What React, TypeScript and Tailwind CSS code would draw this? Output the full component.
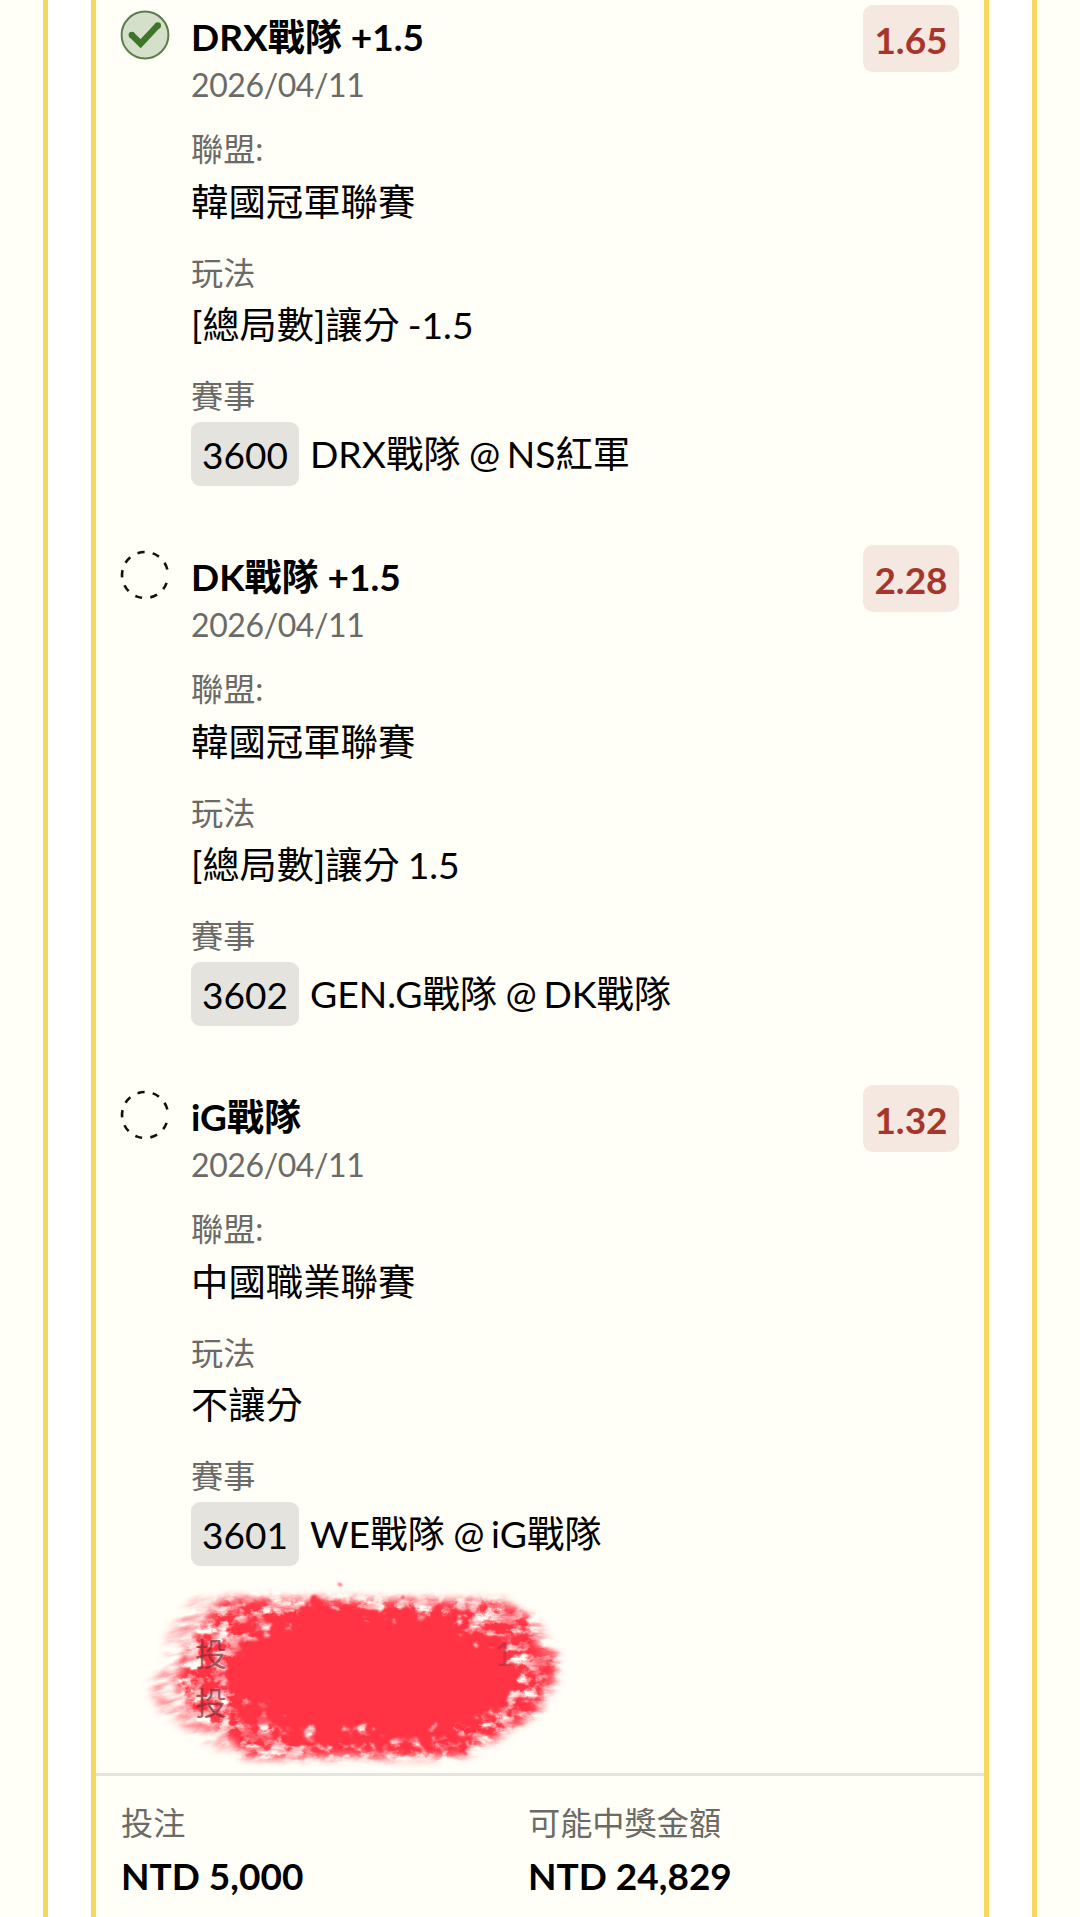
interface Leg {
    title: string
    odds: string
    date: string
    league: string
    market: string
    code: string
    home: string
    away: string
    won?: boolean
}

const legs: Leg[] = [
    {
        title: "DRX戰隊 +1.5",
        odds: "1.65",
        date: "2026/04/11",
        league: "韓國冠軍聯賽",
        market: "[總局數]讓分 -1.5",
        code: "3600",
        home: "DRX戰隊",
        away: "NS紅軍",
        won: true,
    },
    {
        title: "DK戰隊 +1.5",
        odds: "2.28",
        date: "2026/04/11",
        league: "韓國冠軍聯賽",
        market: "[總局數]讓分 1.5",
        code: "3602",
        home: "GEN.G戰隊",
        away: "DK戰隊",
    },
    {
        title: "iG戰隊",
        odds: "1.32",
        date: "2026/04/11",
        league: "中國職業聯賽",
        market: "不讓分",
        code: "3601",
        home: "WE戰隊",
        away: "iG戰隊",
    },
]

// nine dashes in degrees, the last gap (on the right side) is wider
const pendingDashes = "18 20.5 ".repeat(8) + "18 34"

function StatusIcon({ won }: { won?: boolean }) {
    return (
        <svg viewBox="0 0 50 50" className="mt-[5px] ml-[-1px] h-[50px] w-[50px] shrink-0" fill="none">
            {won ? (
                <>
                    <circle cx="25" cy="25" r="23.4" fill="#d5e0cb" stroke="#5c7e4b" strokeWidth="2" />
                    <path d="M12 25.2L20.6 33.6L37.8 15.4" stroke="#3f752b" strokeWidth="6.4" />
                    <circle cx="11.8" cy="25" r="3.2" fill="#3f752b" />
                    <circle cx="37.8" cy="15.4" r="3.2" fill="#3f752b" />
                </>
            ) : (
                <circle
                    cx="25"
                    cy="25"
                    r="23"
                    pathLength="360"
                    stroke="#111"
                    strokeWidth="2.6"
                    strokeDasharray={pendingDashes}
                    transform="rotate(20 25 25)"
                />
            )}
        </svg>
    )
}

function Label({ children }: { children: string }) {
    return <p className="h-[45px] text-[32.2px] leading-[45px] text-[#6b6a66]">{children}</p>
}

function LegItem({ leg }: { leg: Leg }) {
    return (
        <li className="flex h-[540px] items-start">
            <StatusIcon won={leg.won} />
            <div className="ml-[21px] flex-1 text-black">
                <h2 className="h-[55px] text-[37px] leading-[64px] font-bold">{leg.title}</h2>
                <p className="h-[38px] text-[32px] leading-[49px] tracking-[-0.4px] text-[#6b6a66]">{leg.date}</p>
                <div className="mt-[28px]">
                    <Label>聯盟:</Label>
                    <p className="h-[60px] text-[37.4px] leading-[61px]">{leg.league}</p>
                </div>
                <div className="mt-[19px]">
                    <Label>玩法</Label>
                    <p className="h-[60px] text-[37.2px] leading-[60px] [word-spacing:-1.5px]">{leg.market}</p>
                </div>
                <div className="mt-[18px]">
                    <Label>賽事</Label>
                    <div className="mt-[4px] flex h-[64px] items-center text-[37px] leading-[64px]">
                        <span className="h-[64px] w-[108px] rounded-[9px] bg-[#e5e3dd] pt-px text-center">{leg.code}</span>
                        <span className="ml-[11px] text-[37.3px]">
                            {leg.home} <span className="mr-[-3px] ml-[-1px]">@</span> {leg.away}
                        </span>
                    </div>
                </div>
            </div>
            <div className="h-[67px] w-[96px] rounded-[10px] bg-[#f5e8e0] text-center text-[37px] leading-[69px] font-bold text-[#a6352b]">
                {leg.odds}
            </div>
        </li>
    )
}

// Dry brush stroke: soft shapes broken up by thresholded noise, over a solid core
function BrushStroke() {
    return (
        <svg viewBox="0 0 450 200" className="absolute top-0 left-[33px] h-[200px] w-[450px]">
            <defs>
                <filter id="brush" filterUnits="userSpaceOnUse" x="0" y="0" width="450" height="200" colorInterpolationFilters="sRGB">
                    <feGaussianBlur in="SourceAlpha" stdDeviation="5" result="soft" />
                    <feTurbulence type="fractalNoise" baseFrequency="0.07 0.09" numOctaves="5" seed="8" />
                    <feColorMatrix values="0 0 0 0 0  0 0 0 0 0  0 0 0 0 0  4.6 0 0 0 -1.75" result="grain" />
                    <feFlood floodColor="#ff3344" />
                    <feComposite in2="grain" operator="in" />
                    <feComposite in2="soft" operator="in" />
                    <feGaussianBlur stdDeviation="0.6" />
                </filter>
                <filter id="bristles" filterUnits="userSpaceOnUse" x="-60" y="-60" width="600" height="360" colorInterpolationFilters="sRGB">
                    <feTurbulence type="fractalNoise" baseFrequency="0.03 0.11" numOctaves="5" seed="5" />
                    <feColorMatrix values="0 0 0 0 1  0 0 0 0 0.2  0 0 0 0 0.27  2.6 0 0 0 -0.9" result="streaks" />
                    <feGaussianBlur in="SourceGraphic" stdDeviation="4" result="shape" />
                    <feComposite in="streaks" in2="shape" operator="in" />
                    <feGaussianBlur stdDeviation="0.7" />
                </filter>
                <filter id="core" filterUnits="userSpaceOnUse" x="0" y="0" width="450" height="200" colorInterpolationFilters="sRGB">
                    <feTurbulence type="fractalNoise" baseFrequency="0.07" numOctaves="5" seed="3" result="edge" />
                    <feDisplacementMap in="SourceGraphic" in2="edge" scale="60" xChannelSelector="R" yChannelSelector="G" />
                    <feGaussianBlur stdDeviation="1" />
                </filter>
            </defs>
            <g filter="url(#bristles)" transform="rotate(-14 70 100)" fill="#ff3344">
                <path d="M85 22L145 40L150 185L75 174L60 162L42 142L26 125L20 96L44 75L50 48Z" opacity="0.55" />
            </g>
            <g filter="url(#bristles)" fill="#ff3344">
                <path d="M100 18L375 22L406 42L430 76L426 105L410 135L370 160L330 180L140 180L110 174Z" opacity="0.75" />
            </g>
            <path
                d="M92 20L370 22L406 40L410 72L430 78L424 98L408 132L365 160L325 178L115 178L98 158L62 136L46 104L64 58Z"
                filter="url(#brush)"
            />
            <path
                d="M128 52L150 44L175 26L226 24L240 36L318 28L334 50L368 58L394 92L380 122L352 140L322 166L190 160L160 156L138 140L112 130L98 108L90 98L102 78Z"
                fill="#ff3344"
                filter="url(#core)"
            />
        </svg>
    )
}

function Redacted() {
    return (
        <div className="relative h-[203px]">
            <BrushStroke />
            <div className="relative ml-[99px] pt-[50px] text-[32px] text-[#7c2d36]/70">
                <div className="flex h-[49px] w-[318px] justify-between leading-[49px]">
                    <span>投</span>
                    <span className="opacity-50">1</span>
                </div>
                <p className="leading-[49px]">投</p>
            </div>
        </div>
    )
}

export default function App() {
    return (
        <div
            className="h-[1917px] w-[1080px] overflow-hidden bg-[#fffef7] pl-[43px] font-[Lato,'Noto_Sans_CJK_TC',sans-serif]"
            lang="zh-Hant"
        >
            <div className="h-full w-[994px] border-x-[5px] border-[#f5d95f] bg-white px-[43px]">
                <div className="flex h-full w-[898px] flex-col border-x-[5px] border-[#f5d95f] bg-[#fffef7] pt-[5px]">
                    <ul className="h-[1574px] shrink-0 px-[25px]">
                        {legs.map((leg) => (
                            <LegItem key={leg.code} leg={leg} />
                        ))}
                    </ul>
                    <div className="h-[194px] shrink-0">
                        <Redacted />
                    </div>
                    <footer className="flex shrink-0 border-t-[3px] border-[#e6e4de] px-[25px] pt-[24px]">
                        <div className="w-[407px]">
                            <Label>投注</Label>
                            <p className="mt-px text-[37px] leading-[60px] font-bold text-black">NTD 5,000</p>
                        </div>
                        <div>
                            <Label>可能中獎金額</Label>
                            <p className="mt-px text-[37px] leading-[60px] font-bold text-black">NTD 24,829</p>
                        </div>
                    </footer>
                </div>
            </div>
        </div>
    )
}
